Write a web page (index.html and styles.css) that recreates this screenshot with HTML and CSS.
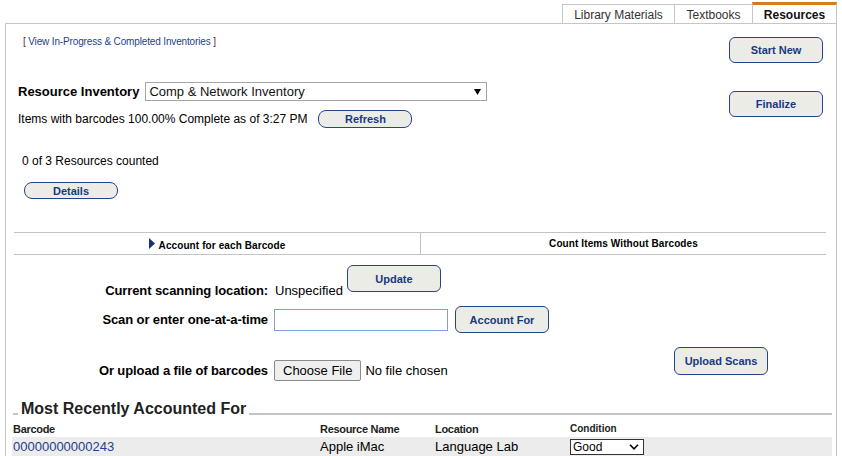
FILE: index.html
```html
<!DOCTYPE html>
<html lang="en">
<head>
    <meta charset="UTF-8">
    <meta name="viewport" content="width=device-width, initial-scale=1.0">
    <title>Resource Inventory</title>
    <link rel="stylesheet" href="styles.css">
</head>
<body>
    <div class="tabs">
        <a class="tab" href="#">Library Materials</a>
        <a class="tab" href="#">Textbooks</a>
        <a class="tab active" href="#">Resources</a>
    </div>

    <div class="panel">
        <div class="summary">
            <div class="summary-left">
                <div class="history-link">
                    <span class="bracket">[</span> <a href="#">View In-Progress &amp; Completed Inventories</a> <span class="bracket">]</span>
                </div>
                <div class="inventory-row">
                    <label class="inventory-label">Resource Inventory</label>
                    <span class="select-wrap">
                        <select class="inventory-select">
                            <option>Comp &amp; Network Inventory</option>
                        </select>
                        <svg class="select-arrow" width="7" height="6" viewBox="0 0 7 6"><polygon points="0,0 7,0 3.5,6" fill="#000"/></svg>
                    </span>
                </div>
                <div class="status-row">
                    <span>Items with barcodes 100.00% Complete as of 3:27 PM</span>
                    <button class="btn btn-small">Refresh</button>
                </div>
                <div class="count">0 of 3 Resources counted</div>
                <button class="btn btn-small details">Details</button>
            </div>
            <div class="summary-right">
                <button class="btn">Start New</button>
                <button class="btn">Finalize</button>
            </div>
        </div>

        <div class="mode-tabs">
            <div class="mode-tab current">
                <svg class="mode-arrow" width="6" height="11" viewBox="0 0 6 11"><polygon points="0,0 6,5.5 0,11" fill="#1b2f7c"/></svg>
                <span>Account for each Barcode</span>
            </div>
            <div class="mode-tab">Count Items Without Barcodes</div>
        </div>

        <div class="scan-form">
            <div class="form-row location-row">
                <label class="form-label">Current scanning location:</label>
                <span class="location-value">Unspecified</span>
                <button class="btn">Update</button>
            </div>
            <div class="form-row barcode-row">
                <label class="form-label">Scan or enter one-at-a-time</label>
                <input type="text" class="barcode-input">
                <button class="btn">Account For</button>
            </div>
            <div class="form-row upload-row">
                <div class="upload-group">
                    <label class="form-label">Or upload a file of barcodes</label>
                    <input type="file" class="file-input">
                </div>
                <button class="btn upload-btn">Upload Scans</button>
            </div>
        </div>

        <div class="recent">
            <div class="recent-title">
                <span class="rule-stub"></span>
                <span class="recent-text">Most Recently Accounted For</span>
                <span class="rule-line"></span>
            </div>
            <table class="recent-table">
                <colgroup>
                    <col class="col-barcode">
                    <col class="col-name">
                    <col class="col-location">
                    <col>
                </colgroup>
                <thead>
                    <tr>
                        <th>Barcode</th>
                        <th>Resource Name</th>
                        <th>Location</th>
                        <th class="col-condition">Condition</th>
                    </tr>
                </thead>
                <tbody>
                    <tr>
                        <td><a href="#">00000000000243</a></td>
                        <td>Apple iMac</td>
                        <td>Language Lab</td>
                        <td>
                            <span class="select-wrap">
                                <select class="condition-select">
                                    <option>Good</option>
                                </select>
                                <svg class="condition-arrow" width="10" height="6" viewBox="0 0 10 6"><polyline points="1,0.8 5,4.8 9,0.8" fill="none" stroke="#000" stroke-width="1.6"/></svg>
                            </span>
                        </td>
                    </tr>
                </tbody>
            </table>
        </div>
    </div>
</body>
</html>
```

FILE: styles.css
```css
body {
    font-family: "Liberation Sans", Arial, sans-serif;
    font-size: 12px;
    color: #000;
    background: #fff;
    margin: 0;
    padding: 0;
}

a {
    color: #1d3f8c;
    text-decoration: none;
}

/* top tabs */
.tabs {
    display: flex;
    justify-content: flex-end;
    align-items: flex-end;
    height: 21px;
    margin-top: 2px;
    padding-right: 5px;
}

.tab {
    display: flex;
    align-items: center;
    justify-content: center;
    height: 19px;
    box-sizing: border-box;
    border: 1px solid #c6c6c6;
    border-bottom: none;
    margin-left: -1px;
    color: #333;
    font-size: 12px;
    padding-top: 1px;
}

.tab:nth-child(1) { width: 113px; }
.tab:nth-child(2) { width: 79px; }

.tab.active {
    width: 85px;
    height: 21px;
    border-top: 3px solid #d9781d;
    color: #111;
    font-weight: bold;
}

.panel {
    margin: 0 5px;
    border: 1px solid #c6c6c6;
    border-bottom: none;
    min-height: 440px;
}

/* summary area */
.summary {
    display: flex;
    justify-content: space-between;
    padding: 0 13px 0 12px;
}

.history-link {
    margin: 12px 0 0 5px;
    font-size: 10px;
    line-height: 12px;
    letter-spacing: -0.15px;
}

.bracket {
    color: #5b1e3c;
}

.inventory-row {
    display: flex;
    align-items: center;
    height: 20px;
    margin-top: 33px;
}

.inventory-label {
    font-size: 13px;
    font-weight: bold;
    margin-right: 6px;
}

.select-wrap {
    position: relative;
    display: inline-block;
}

.inventory-select {
    appearance: none;
    width: 342px;
    height: 19px;
    border: 1px solid #a6a6a6;
    background: #fff;
    font-family: "Liberation Sans", Arial, sans-serif;
    font-size: 13px;
    color: #111;
    padding: 0 3px;
    margin: 0;
    display: block;
}

.select-arrow {
    position: absolute;
    right: 6px;
    top: 7px;
    pointer-events: none;
}

.status-row {
    display: flex;
    align-items: center;
    height: 18px;
    margin-top: 9px;
}

.status-row .btn {
    margin-left: 11px;
}

.count {
    margin: 26px 0 0 4px;
    line-height: 14px;
}

.details {
    display: block;
    margin: 14px 0 33px 6px;
}

.summary-right {
    display: flex;
    flex-direction: column;
    gap: 28px;
    padding-top: 13px;
}

/* buttons */
.btn {
    width: 94px;
    height: 26px;
    padding: 0;
    background: #ecece6;
    border: 1px solid #24458c;
    border-radius: 6px;
    color: #17397f;
    font-family: "Liberation Sans", Arial, sans-serif;
    font-size: 11px;
    font-weight: bold;
    cursor: pointer;
}

.btn-small {
    height: 18px;
    border-radius: 8px;
}

.details {
    height: 17px;
}

/* mode tabs */
.mode-tabs {
    display: grid;
    grid-template-columns: 1fr 1fr;
    margin: 0 10px 0 8px;
    border-top: 1px solid #c3c3c3;
    border-bottom: 1px solid #c3c3c3;
    height: 21px;
}

.mode-tab {
    display: flex;
    align-items: center;
    justify-content: center;
    font-size: 10px;
    font-weight: bold;
    letter-spacing: 0.1px;
}

.mode-tab + .mode-tab {
    border-left: 1px solid #c3c3c3;
}

.mode-tab.current span {
    margin-top: 3px;
}

.mode-arrow {
    margin-right: 4px;
}

/* scan form */
.scan-form {
    padding-left: 8px;
    font-size: 13px;
}

.form-row {
    display: flex;
}

.form-label {
    width: 254px;
    text-align: right;
    font-weight: bold;
    line-height: 14px;
    letter-spacing: -0.1px;
    margin-right: 6px;
}

.location-row {
    margin-top: 10px;
    height: 27px;
    align-items: flex-start;
}

.location-row .form-label,
.location-value {
    margin-top: 19px;
}

.location-value {
    line-height: 14px;
    margin-left: 1px;
    margin-right: 4px;
}

.location-row .btn,
.barcode-row .btn {
    height: 27px;
}

.barcode-row {
    margin-top: 14px;
    align-items: center;
}

.barcode-input {
    width: 174px;
    height: 22px;
    box-sizing: border-box;
    border: 1px solid #7f9fd8;
    margin: 0 7px 0 0;
    font-family: "Liberation Sans", Arial, sans-serif;
}

.upload-row {
    margin-top: 14px;
    align-items: flex-start;
}

.upload-group {
    display: flex;
    align-items: center;
    height: 21px;
    margin-top: 13px;
}

.file-input {
    width: 176px;
    font-family: "Liberation Sans", Arial, sans-serif;
    font-size: 13px;
}

.file-input::file-selector-button {
    height: 21px;
    padding: 0 8px;
    margin-right: 4px;
    border: 1px solid #8a8a8a;
    border-radius: 2px;
    background: #efefef;
    font-family: "Liberation Sans", Arial, sans-serif;
    font-size: 13px;
    color: #000;
}

.upload-btn {
    height: 28px;
    margin-left: 224px;
}

/* recent list */
.recent {
    margin-top: 19px;
}

.recent-title {
    display: flex;
    height: 18px;
    margin: 0 4px 0 7px;
}

.rule-stub,
.rule-line {
    margin-top: 13px;
    border-top: 2px solid #c4c4c4;
    height: 0;
}

.rule-stub {
    width: 5px;
}

.rule-line {
    flex: 1;
}

.recent-text {
    font-size: 16px;
    font-weight: bold;
    line-height: 18px;
    color: #222;
    margin: 0 3px;
}

.recent-table {
    margin: 3px 0 0 6px;
    width: 820px;
    table-layout: fixed;
    border-collapse: collapse;
    border-spacing: 0;
}

.col-barcode { width: 307px; }
.col-name { width: 115px; }
.col-location { width: 135px; }

.recent-table th {
    text-align: left;
    font-size: 11px;
    font-weight: bold;
    letter-spacing: -0.3px;
    line-height: 16px;
    height: 16px;
    padding: 0 0 0 1px;
    color: #222;
}

.recent-table th.col-condition {
    font-size: 10px;
    letter-spacing: 0;
}

.recent-table td {
    background: #ececec;
    font-size: 13px;
    height: 19px;
    padding: 0 0 0 1px;
    vertical-align: middle;
}

.condition-select {
    appearance: none;
    display: block;
    width: 74px;
    height: 16px;
    border: 1px solid #333;
    background: #fff;
    font-family: "Liberation Sans", Arial, sans-serif;
    font-size: 12px;
    padding: 0 2px;
    margin: 0;
}

.condition-arrow {
    position: absolute;
    right: 5px;
    top: 5px;
    pointer-events: none;
}
```
